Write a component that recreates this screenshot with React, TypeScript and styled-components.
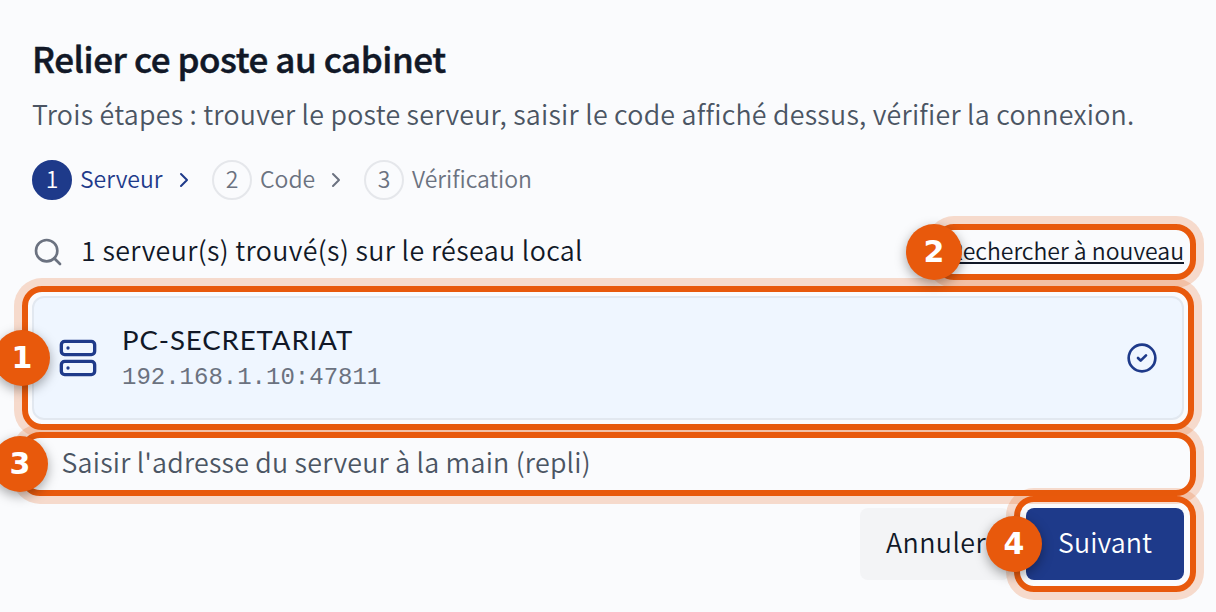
import React from 'react';
import styled, { createGlobalStyle } from 'styled-components';
import { Search, Server, CircleCheck, ChevronRight } from 'lucide-react';

const GlobalStyle = createGlobalStyle`
  *, *::before, *::after { box-sizing: border-box; }
  body { margin: 0; background: #fafbfd; }
  button { font: inherit; border: 0; padding: 0; background: none; }
`;

const Page = styled.main`
  width: 1216px;
  height: 612px;
  padding: 32px;
  overflow: hidden;
  display: flex;
  flex-direction: column;
  font-family: "Noto Sans CJK JP", "Noto Sans", sans-serif;
  font-size: 26.8px;
  font-weight: 350;
  line-height: 40px;
  color: #111827;
  white-space: nowrap;
`;

const Title = styled.h1`
  margin: 0;
  height: 56px;
  line-height: 51px;
  font-size: 35px;
  font-weight: 500;
  letter-spacing: -0.43px;
  -webkit-text-stroke: 0.5px currentColor;
`;

const Intro = styled.p`
  margin: 6px 0 0;
  line-height: 40px;
  letter-spacing: 0.245px;
  color: #4b5563;
`;

const Steps = styled.ol`
  list-style: none;
  margin: 26px 0 0;
  padding: 0;
  display: flex;
  gap: 16px;
  font-size: 23px;
`;

const Step = styled.li<{ $active?: boolean }>`
  display: flex;
  align-items: center;
  gap: 8px;
  height: 40px;
  color: ${p => (p.$active ? '#1e3a8a' : '#6b7280')};
`;

const StepNumber = styled.span<{ $active?: boolean }>`
  width: 40px;
  height: 40px;
  border-radius: 50%;
  border: 2px solid ${p => (p.$active ? '#1e3a8a' : '#e5e7eb')};
  background: ${p => (p.$active ? '#1e3a8a' : 'transparent')};
  color: ${p => (p.$active ? '#ffffff' : 'inherit')};
  line-height: 33px;
  text-align: center;
`;

const StepLabel = styled.span<{ $width?: number }>`
  width: ${p => (p.$width ? `${p.$width}px` : 'auto')};
  height: 40px;
  line-height: 37px;
`;

const ResultBar = styled.div`
  display: flex;
  align-items: center;
  justify-content: space-between;
  height: 44px;
  margin-top: 30px;
`;

const ResultText = styled.div`
  display: flex;
  align-items: center;
  gap: 17px;
  height: 40px;
  line-height: 36px;
  letter-spacing: 0.37px;
  svg { color: #6b7280; }
  span { height: 40px; }
`;

const Callout = styled.div<{ $inset: string }>`
  position: relative;
  &::after {
    content: '';
    position: absolute;
    inset: ${p => p.$inset};
    border: 6px solid #e8590c;
    border-radius: 20px;
    box-shadow: 0 0 0 8px rgba(232, 89, 12, 0.2);
    pointer-events: none;
  }
`;

const Marker = styled.span<{ $left: number; $top: number }>`
  position: absolute;
  z-index: 2;
  left: ${p => p.$left}px;
  top: ${p => p.$top}px;
  width: 56px;
  height: 56px;
  border-radius: 50%;
  background: #e8590c;
  box-shadow: 0 4px 12px rgba(0, 0, 0, 0.35);
  color: #ffffff;
  font: 700 30px/55px "DejaVu Sans", sans-serif;
  letter-spacing: 0;
  text-align: center;
`;

const SearchAgain = styled.button`
  display: block;
  width: 238px;
  height: 36px;
  padding-bottom: 3px;
  text-align: right;
  font-size: 23px;
  line-height: 33px;
  color: #111827;
  text-decoration: underline;
  text-decoration-thickness: 2px;
  text-underline-offset: 1.5px;
  text-decoration-skip-ink: none;
`;

const ServerCard = styled.div`
  display: flex;
  align-items: center;
  height: 124px;
  padding: 0 24px;
  border: 2px solid #e2e8f0;
  border-radius: 12px;
  background: #eff6ff;
  color: #1e3a8a;
`;

const ServerInfo = styled.div`
  flex: 1;
  margin-left: 24px;
`;

const ServerName = styled.div`
  height: 40px;
  font-family: Lato, sans-serif;
  font-size: 27.6px;
  font-weight: 400;
  line-height: 36px;
  letter-spacing: 0.9px;
  color: #111827;
`;

const ServerAddress = styled.div`
  font: 24px/32px "Liberation Mono", monospace;
  color: #6b7280;
`;

const ManualEntry = styled.button`
  display: block;
  width: 100%;
  height: 56px;
  padding: 0 0 4px 29.5px;
  line-height: 52px;
  text-align: left;
  letter-spacing: 0.23px;
  color: #4b5563;
`;

const Actions = styled.div`
  display: flex;
  justify-content: flex-end;
  gap: 16px;
`;

const ActionButton = styled.button<{ $primary?: boolean }>`
  display: block;
  width: ${p => (p.$primary ? 158 : 150)}px;
  height: 72px;
  padding: 0 0 5px ${p => (p.$primary ? 0 : 2)}px;
  border-radius: 8px;
  background: ${p => (p.$primary ? '#1e3a8a' : '#f3f4f6')};
  color: ${p => (p.$primary ? '#ffffff' : '#111827')};
  letter-spacing: ${p => (p.$primary ? 0.1 : 0.45)}px;
  line-height: 66px;
  text-align: center;
`;

const CardSlot = styled.div`margin-top: 22px;`;
const ManualSlot = styled.div`margin-top: 16px;`;
const ActionSlot = styled.div`margin-top: 16px;`;

export default function App() {
  return (
    <>
      <GlobalStyle />
      <Page>
        <Title>Relier ce poste au cabinet</Title>
        <Intro>Trois étapes : trouver le poste serveur, saisir le code affiché dessus, vérifier la connexion.</Intro>
        <Steps>
          <Step $active>
            <StepNumber $active>1</StepNumber>
            <StepLabel $width={84}>Serveur</StepLabel>
            <ChevronRight size={24} />
          </Step>
          <Step>
            <StepNumber>2</StepNumber>
            <StepLabel $width={56}>Code</StepLabel>
            <ChevronRight size={24} />
          </Step>
          <Step>
            <StepNumber>3</StepNumber>
            <StepLabel>Vérification</StepLabel>
          </Step>
        </Steps>
        <ResultBar>
          <ResultText>
            <Search size={32} />
            <span>1 serveur(s) trouvé(s) sur le réseau local</span>
          </ResultText>
          <Callout $inset="-10px -12px -10px -12px">
            <SearchAgain>Rechercher à nouveau</SearchAgain>
            <Marker $left={-40} $top={-10}>2</Marker>
          </Callout>
        </ResultBar>
        <CardSlot>
          <Callout $inset="-10px">
            <ServerCard>
              <Server size={40} />
              <ServerInfo>
                <ServerName>PC-SECRETARIAT</ServerName>
                <ServerAddress>192.168.1.10:47811</ServerAddress>
              </ServerInfo>
              <CircleCheck size={32} />
            </ServerCard>
            <Marker $left={-38} $top={34}>1</Marker>
          </Callout>
        </CardSlot>
        <ManualSlot>
          <Callout $inset="-4px -12px -4px -12px">
            <ManualEntry>Saisir l'adresse du serveur à la main (repli)</ManualEntry>
            <Marker $left={-40} $top={0}>3</Marker>
          </Callout>
        </ManualSlot>
        <ActionSlot>
          <Actions>
            <ActionButton>Annuler</ActionButton>
            <Callout $inset="-12px">
              <ActionButton $primary>Suivant</ActionButton>
              <Marker $left={-40} $top={8}>4</Marker>
            </Callout>
          </Actions>
        </ActionSlot>
      </Page>
    </>
  );
}
